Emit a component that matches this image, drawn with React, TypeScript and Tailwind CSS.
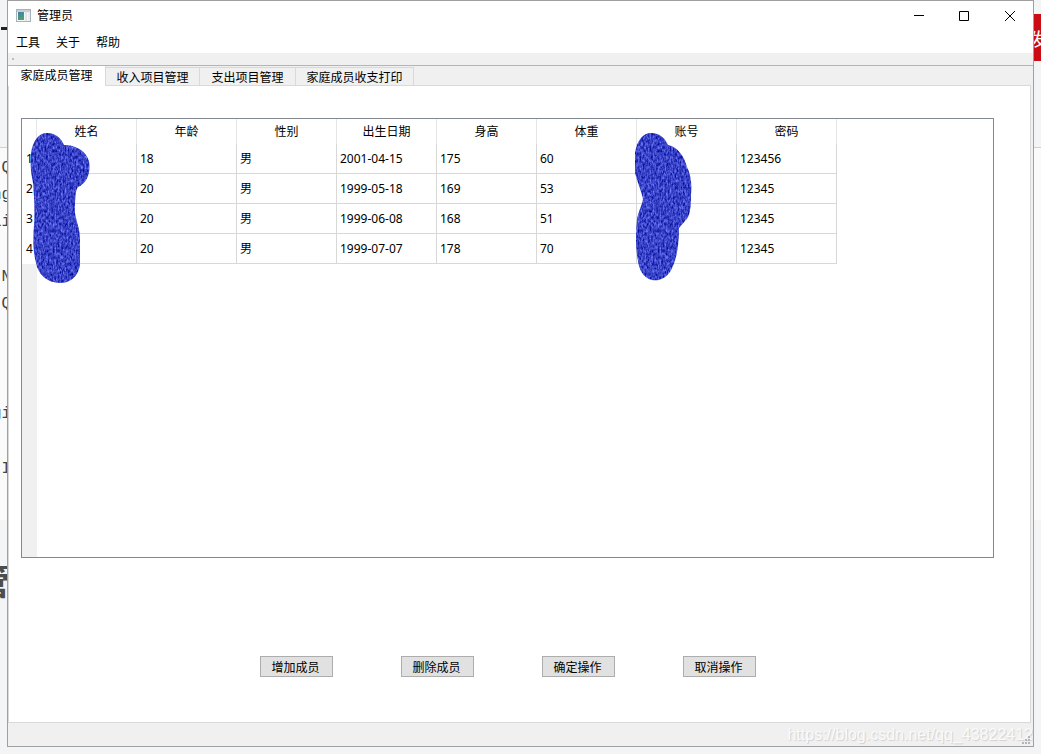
import React, { useState } from 'react';

const menus = ['工具', '关于', '帮助'];
const tabs = [
  { label: '家庭成员管理', width: 'w-[97px]' },
  { label: '收入项目管理', width: 'w-[94px]' },
  { label: '支出项目管理', width: 'w-24' },
  { label: '家庭成员收支打印', width: 'w-[118px]' },
];
const columns = ['姓名', '年龄', '性别', '出生日期', '身高', '体重', '账号', '密码'];
const actions = ['增加成员', '删除成员', '确定操作', '取消操作'];

const members = [
  ['', '18', '男', '2001-04-15', '175', '60', '', '123456'],
  ['', '20', '男', '1999-05-18', '169', '53', '', '12345'],
  ['', '20', '男', '1999-06-08', '168', '51', '', '12345'],
  ['', '20', '男', '1999-07-07', '178', '70', '', '12345'],
];

// Lines of the page behind the window, cut off by its left edge
const codeLines = [
  { text: '.Q', height: 'h-[27px]' },
  { text: 'ng', height: 'h-[27px]' },
  { text: 'li', height: 'h-[27px]' },
  { text: '', height: 'h-[28px]' },
  { text: ' N', height: 'h-[27px]' },
  { text: ' Q', height: 'h-[27px]' },
  { text: '', height: 'h-[83px]' },
  { text: 'gi', height: 'h-[27px]' },
  { text: '', height: 'h-[28px]' },
  { text: '-I', height: 'h-[27px]' },
];

function AppIcon() {
  return (
    <svg width="16" height="14" viewBox="0 0 16 14" aria-hidden="true">
      <defs>
        <linearGradient id="pane" x1="0" y1="0" x2="0.4" y2="1">
          <stop offset="0" stopColor="#3f7fb0" />
          <stop offset="1" stopColor="#4fa06c" />
        </linearGradient>
      </defs>
      <rect x="0.5" y="0.5" width="14" height="12" fill="#f4f6f7" stroke="#a9b2b8" />
      <rect x="1" y="1" width="13" height="2" fill="#c5ced4" />
      <rect x="2" y="3" width="6" height="8" fill="url(#pane)" />
      <rect x="9" y="3" width="2" height="9" fill="#dfe5e8" />
      <rect x="12" y="3" width="2" height="9" fill="#e8edef" />
    </svg>
  );
}

function ScribbleDefs() {
  return (
    <svg width="0" height="0" className="absolute" aria-hidden="true">
      <filter id="grain" x="0" y="0" width="100%" height="100%" colorInterpolationFilters="sRGB">
        <feTurbulence type="fractalNoise" baseFrequency="0.6 0.3" numOctaves="3" seed="4" />
        <feColorMatrix values="0.7 0 0 0 -0.13  0.7 0 0 0 -0.09  0.6 0 0 0 0.48  0 0 0 0 1" />
        <feComposite in2="SourceGraphic" operator="in" />
      </filter>
    </svg>
  );
}

function Scribble({ path, className }: { path: string; className: string }) {
  return (
    <svg width="62" height="152" viewBox="0 0 62 152" className={className} aria-hidden="true">
      <path d={path} fill="#3a42cc" filter="url(#grain)" />
    </svg>
  );
}

function WindowControls() {
  return (
    <div className="flex">
      <button aria-label="最小化" className="flex h-7 w-11 items-center justify-center">
        <svg width="10" height="10" viewBox="0 0 10 10"><path d="M0 4.5H10" stroke="#000" /></svg>
      </button>
      <button aria-label="最大化" className="flex h-7 w-[46px] items-center justify-center">
        <svg width="10" height="10" viewBox="0 0 10 10"><path d="M.5 .5H9.5V9.5H.5Z" fill="none" stroke="#000" /></svg>
      </button>
      <button aria-label="关闭" className="flex h-7 w-[46px] items-center justify-center">
        <svg width="10" height="10" viewBox="0 0 10 10"><path d="M0 0L10 10M10 0L0 10" stroke="#000" /></svg>
      </button>
    </div>
  );
}

export default function App() {
  const [active, setActive] = useState(0);

  return (
    <div className="flex min-h-screen bg-[#f3f4f6] font-['Noto_Sans','Noto_Sans_CJK_SC',sans-serif] text-xs text-black">
      <div className="flex w-[7px] shrink-0 flex-col overflow-hidden" aria-hidden="true">
        <div className="h-[148px] border-b border-[#d0d0d0] pt-[27px] pl-px">
          <div className="h-[3px] bg-[#222]" />
        </div>
        <div className="h-[372px] bg-[#fafafa] pt-[7px]">
          {codeLines.map((line, i) => (
            <pre key={i} className={`-ml-2 w-6 font-['Liberation_Mono',monospace] text-base leading-[27px] text-[#444] ${line.height}`}>{line.text}</pre>
          ))}
        </div>
        <div className="-ml-[26px] w-9 pt-[42px] text-4xl font-bold text-[#4d4d4d]">管</div>
      </div>

      <main className="mb-[7px] flex min-w-0 flex-1 flex-col border border-[#a0a0a0] bg-[#f0f0f0]">
        <header className="flex h-[29px] items-center justify-between bg-white pl-2">
          <div className="flex items-center gap-[5px]">
            <AppIcon />
            <h1 className="text-xs">管理员</h1>
          </div>
          <WindowControls />
        </header>
        <nav className="flex h-[23px] items-center gap-4 bg-white px-2 pt-0.5">
          {menus.map((m) => (
            <button key={m}>{m}</button>
          ))}
        </nav>
        <div className="h-[13px] border-t border-b border-t-[#f0f0f0] border-b-[#b4b4b4] pt-1 pl-1">
          <div className="size-0.5 bg-[#bdbdbd]" />
        </div>

        <div role="tablist" className="flex h-[19px] items-end">
          {tabs.map((tab, i) => (
            <button
              key={tab.label}
              role="tab"
              aria-selected={i === active}
              onClick={() => setActive(i)}
              className={`${tab.width} ${
                i === active
                  ? 'relative z-10 -mb-px box-content h-5 border-r border-[#d9d9d9] bg-white pt-0'
                  : 'h-[18px] border-t border-r border-[#d9d9d9] pt-0.5'
              }`}
            >
              {tab.label}
            </button>
          ))}
        </div>

        <section role="tabpanel" className="mr-0.5 flex flex-1 flex-col border border-[#d9d9d9] bg-white">
          <div className="mt-8 mr-9 ml-3 flex h-[440px] border border-[#828790]">
            <div className="relative flex w-[815px] shrink-0 bg-linear-to-r from-[#f0f0f0] from-[15px] to-white to-[15px]">
              <table className="w-[815px] table-fixed border-separate border-spacing-0 self-start bg-white">
                <thead>
                  <tr className="h-[25px]">
                    <td className="w-[15px] border-r border-[#e5e5e5] p-0" />
                    {columns.map((c) => (
                      <th key={c} scope="col" className="w-[100px] border-r border-[#e5e5e5] p-0 font-normal">{c}</th>
                    ))}
                  </tr>
                </thead>
                <tbody>
                  {members.map((row, r) => (
                    <tr key={r} className="h-[30px]">
                      <th scope="row" className="p-0 pl-1 text-left font-normal">{r + 1}</th>
                      {row.map((cell, c) => (
                        <td key={c} className="border-r border-b border-[#d8d8d8] p-0 pl-[3px]">{cell}</td>
                      ))}
                    </tr>
                  ))}
                </tbody>
              </table>
              <ScribbleDefs />
              <Scribble
                className="absolute top-3.5 left-2"
                path="M17 0C26 0 31 5 34 12C46 12 56 18 59 28C61 40 57 50 48 54C45 58 45 68 45 80C47 91 50 96 50 106V132C48 144 40 150 30 150C17 150 8 141 6 130C3 118 3 108 4 92C5 76 4 62 3 50C1 40 0 32 1 20C3 7 9 0 17 0Z"
              />
              <Scribble
                className="absolute top-3.5 left-[613px]"
                path="M16 0C25 0 30 5 33 12C43 14 49 23 52 34C56 42 57 51 56 62C56 75 55 84 50 88L44 95C44 115 41 129 35 139C29 147 22 148 17 147C8 145 4 136 3 128C0 112 1 98 2 86C4 77 7 72 8 66C6 57 2 48 0 40V20C2 7 8 0 16 0Z"
              />
            </div>
          </div>
          <div className="flex gap-[68px] pt-[98px] pl-[251px]">
            {actions.map((a) => (
              <button key={a} className="h-[21px] w-[73px] border border-[#adadad] bg-[#e1e1e1] pt-0.5 pr-0.5">{a}</button>
            ))}
          </div>
        </section>

        <footer className="relative flex h-[23px] items-center justify-end pt-px">
          <span className="font-['Liberation_Sans',Arial,sans-serif] text-base whitespace-nowrap text-[#fafafa] [text-shadow:1px_1px_1px_#cfcfcf]">
            https://blog.csdn.net/qq_43822412
          </span>
          <svg width="8" height="8" viewBox="0 0 8 8" className="absolute right-[3px] bottom-0.5" fill="#b5b5b5" aria-hidden="true">
            <path d="M6 0h2v2h-2zM3 3h2v2h-2zM6 3h2v2h-2zM0 6h2v2h-2zM3 6h2v2h-2zM6 6h2v2h-2z" />
          </svg>
        </footer>
      </main>

      <div className="flex w-[7px] shrink-0 flex-col overflow-hidden" aria-hidden="true">
        <div className="h-[148px] border-b border-[#d0d0d0] pt-3.5">
          <div className="h-[47px] bg-[#cb0c15]">
            <div className="-ml-1 w-5 text-lg leading-[50px] text-white">发</div>
          </div>
        </div>
        <div className="h-[372px] bg-[#fafafa]" />
      </div>
    </div>
  );
}
